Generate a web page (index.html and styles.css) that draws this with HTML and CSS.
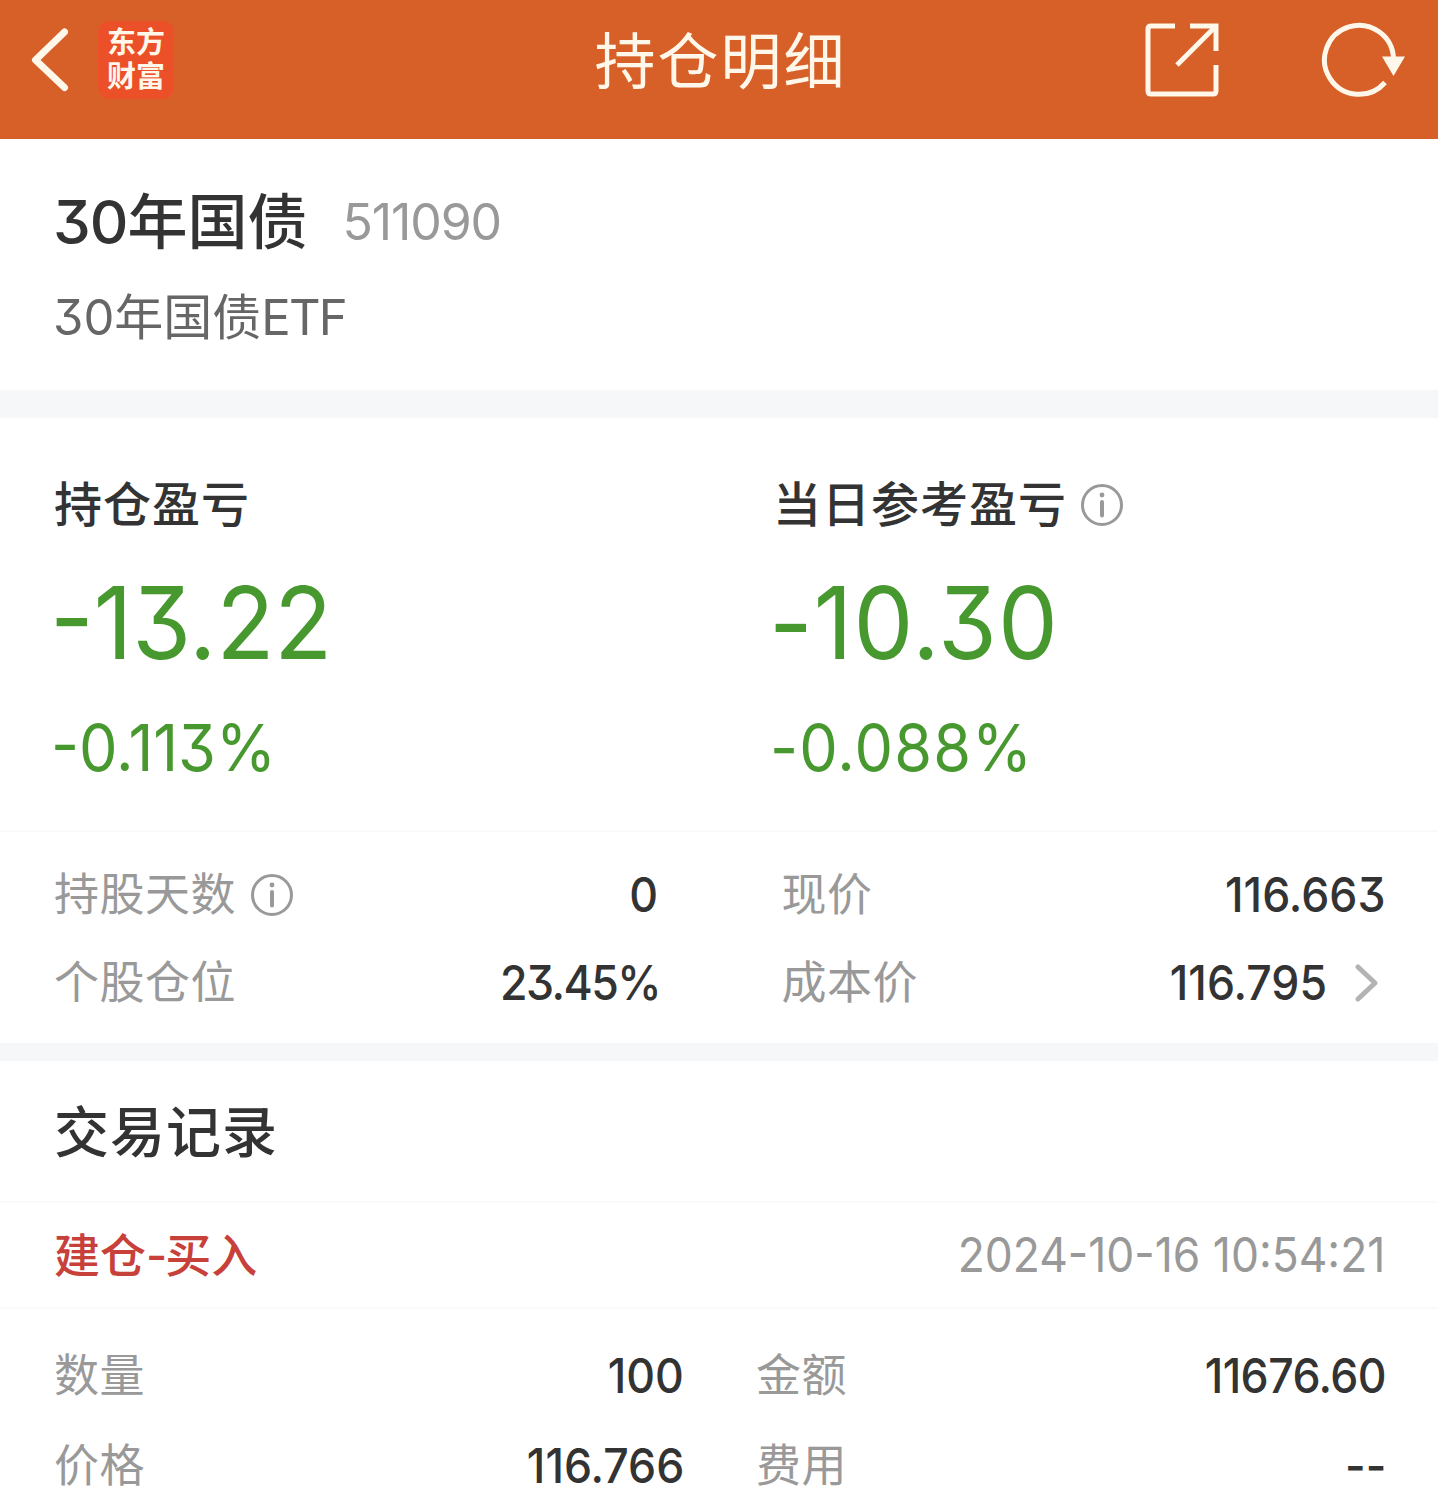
FILE: index.html
```html
<!DOCTYPE html>
<html lang="zh-CN">
<head>
  <meta charset="UTF-8" />
  <meta name="viewport" content="width=device-width, initial-scale=1.0"/>
  <title>持仓明细</title>
  <link rel="stylesheet" href="styles.css">
</head>
<body>
  <header class="header">
    <div class="header-left">
      <svg class="back-icon" viewBox="0 0 40 66" width="40" height="66">
        <path d="M34.500 5 L5.500 33 L34.500 60.500" />
      </svg>
      <div class="logo"><span>东方</span><span>财富</span></div>
    </div>
    <h1 class="header-title">持仓明细</h1>
    <div class="header-right">
      <svg class="share-icon" viewBox="0 0 76 76" width="76" height="76">
        <path d="M31 4 H7 Q4 4 4 7 V69 Q4 72 7 72 H69 Q72 72 72 69 V43" />
        <path d="M46 4 H72 V29" />
        <path d="M71 5 L33 43" />
      </svg>
      <svg class="refresh-icon" viewBox="0 0 86 76" width="86" height="76">
        <path d="M72.500 37 A34.500 34.500 0 1 0 64 60.500" />
        <polygon points="61,34.500 84,34.500 72.500,54" />
      </svg>
    </div>
  </header>

  <section class="stock">
    <div class="stock-name">
      <span class="name"><span class="num">30</span>年国债</span>
      <span class="code">511090</span>
    </div>
    <div class="stock-full">30年国债<span class="etf">ETF</span></div>
  </section>

  <section class="profit">
    <div class="profit-item">
      <div class="profit-label">持仓盈亏</div>
      <div class="profit-value">-13.22</div>
      <div class="profit-rate">-0.113%</div>
    </div>
    <div class="profit-item day">
      <div class="profit-label">当日参考盈亏
        <svg class="info-icon" viewBox="0 0 44 44" width="44" height="44">
          <circle cx="22" cy="22" r="19.500" />
          <path d="M22 19 V32.500" />
          <circle class="dot" cx="22" cy="12" r="2.400" />
        </svg>
      </div>
      <div class="profit-value">-10.30</div>
      <div class="profit-rate">-0.088%</div>
    </div>
  </section>

  <section class="stats">
    <div class="row">
      <span class="label">持股天数
        <svg class="info-icon" viewBox="0 0 44 44" width="44" height="44">
          <circle cx="22" cy="22" r="19.500" />
          <path d="M22 19 V32.500" />
          <circle class="dot" cx="22" cy="12" r="2.400" />
        </svg>
      </span>
      <span class="value">0</span>
    </div>
    <div class="row">
      <span class="label">现价</span>
      <span class="value">116.663</span>
    </div>
    <div class="row">
      <span class="label">个股仓位</span>
      <span class="value percent">23.45%</span>
    </div>
    <div class="row">
      <span class="label">成本价</span>
      <div class="cost">
        <span class="value">116.795</span>
        <svg class="arrow-icon" viewBox="0 0 24 40" width="24" height="40">
          <path d="M3 4 L20 20 L3 36" />
        </svg>
      </div>
    </div>
  </section>

  <section class="records">
    <h2 class="records-title">交易记录</h2>
    <div class="record-head">
      <span class="record-type">建仓<span class="dash">-</span>买入</span>
      <span class="record-time">2024-10-16 10:54:21</span>
    </div>
    <div class="record-body">
      <div class="row">
        <span class="label">数量</span>
        <span class="value">100</span>
      </div>
      <div class="row">
        <span class="label">金额</span>
        <span class="value amount">11676.60</span>
      </div>
      <div class="row">
        <span class="label">价格</span>
        <span class="value">116.766</span>
      </div>
      <div class="row">
        <span class="label">费用</span>
        <span class="value">--</span>
      </div>
    </div>
  </section>
</body>
</html>
```

FILE: styles.css
```css
* {
  box-sizing: border-box;
}

body {
  margin: 0;
  height: 1500px;
  overflow: hidden;
  background: #fff;
  color: #333;
  font-family: Inter, "Noto Sans CJK SC", sans-serif;
  font-feature-settings: "cv09" 1;
}

h1,
h2 {
  margin: 0;
  font-weight: 400;
}

svg {
  display: block;
  flex: none;
  fill: none;
}

/* header */
.header {
  display: grid;
  grid-template-columns: 1fr auto 1fr;
  align-items: center;
  height: 139px;
  padding: 0 31px 19px 30px;
  background: #d75f28;
  color: #fff8ea;
}

.header-left {
  display: flex;
  align-items: center;
  gap: 28px;
}

.back-icon {
  stroke: #fff8ea;
  stroke-width: 7;
  stroke-linecap: round;
  stroke-linejoin: round;
}

.logo {
  display: flex;
  flex-direction: column;
  align-items: center;
  justify-content: center;
  width: 76px;
  height: 78px;
  border-radius: 12px;
  background: #ec5029;
  font-size: 29px;
  font-weight: 700;
  line-height: 34px;
}

.header-title {
  padding: 3px 0 0 4px;
  font-size: 61px;
  letter-spacing: 2px;
  line-height: 80px;
}

.header-right {
  display: flex;
  align-items: center;
  justify-content: flex-end;
  gap: 101px;
}

.share-icon,
.refresh-icon {
  stroke: #fff8ea;
  stroke-width: 5;
}

.refresh-icon polygon {
  fill: #fff8ea;
  stroke: none;
}

/* stock name */
.stock {
  height: 279px;
  padding: 41px 53px 0;
  border-bottom: 28px solid #f6f7f9;
}

.stock-name {
  display: flex;
  align-items: center;
  gap: 35px;
  line-height: 84px;
}

.name {
  font-size: 60px;
  font-weight: 500;
}

.num {
  letter-spacing: -1px;
}

.code {
  color: #999;
  font-size: 50px;
  letter-spacing: -1.100px;
}

.stock-full {
  margin-top: 19px;
  color: #666;
  font-size: 49px;
  line-height: 69px;
}

.etf {
  letter-spacing: -1.800px;
}

/* profit */
.profit {
  display: grid;
  grid-template-columns: 1fr 1fr;
  height: 414px;
  padding-top: 57px;
  border-bottom: 2px solid #fafafa;
}

.profit-item {
  padding-left: 54px;
}

.profit-label {
  display: flex;
  align-items: center;
  gap: 13px;
  font-size: 48px;
  font-weight: 500;
  letter-spacing: 1px;
  line-height: 60px;
}

/* slightly condensed digits */
.profit-value,
.profit-rate {
  color: #47992f;
  transform: scaleX(0.940);
  transform-origin: left;
}

.profit-value {
  margin: 37px 0 0 -4px;
  font-size: 101px;
  line-height: 101px;
}

.profit-rate {
  margin: 40px 0 0 -3px;
  font-size: 65px;
  line-height: 70px;
}

.day .profit-value,
.day .profit-rate {
  letter-spacing: 1.200px;
}

.info-icon {
  stroke: #999;
  stroke-width: 3;
  stroke-linecap: round;
}

.info-icon path {
  stroke-width: 4;
}

.info-icon .dot {
  fill: #999;
  stroke: none;
}

/* stats */
.stats {
  display: grid;
  grid-template-columns: 1fr 1fr;
  align-content: start;
  column-gap: 124px;
  height: 229px;
  padding: 19px 53px 0 54px;
  border-bottom: 18px solid #f6f7f9;
}

.row {
  display: flex;
  align-items: center;
  justify-content: space-between;
  height: 88px;
}

.label {
  display: flex;
  align-items: center;
  gap: 14px;
  color: #999;
  font-size: 45px;
  letter-spacing: 0.500px;
  line-height: 60px;
}

.value {
  font-size: 48px;
  font-weight: 450;
  line-height: 60px;
  transform: scaleX(0.930);
  transform-origin: right;
}

.percent {
  margin-right: -2px;
  letter-spacing: -1.700px;
}

.amount {
  letter-spacing: -0.600px;
}

.cost {
  display: flex;
  align-items: center;
  gap: 28px;
}

.arrow-icon {
  margin-right: 6px;
  stroke: #b3b3b3;
  stroke-width: 5;
  stroke-linecap: round;
  stroke-linejoin: round;
}

/* records */
.records-title {
  height: 140px;
  padding-left: 54px;
  font-size: 55px;
  font-weight: 500;
  letter-spacing: 1px;
  line-height: 142px;
}

.record-head {
  display: flex;
  align-items: center;
  justify-content: space-between;
  height: 108px;
  padding: 0 53px 0 54px;
  border-top: 2px solid #fafafa;
  border-bottom: 2px solid #fafafa;
}

.record-type {
  color: #c8403a;
  font-size: 46px;
  font-weight: 500;
  line-height: 60px;
}

.dash {
  letter-spacing: -2px;
}

.record-time {
  color: #999;
  font-size: 48px;
  line-height: 60px;
  transform: scaleX(0.925);
  transform-origin: right;
}

.record-body {
  display: grid;
  grid-template-columns: 1fr 1fr;
  column-gap: 72px;
  padding: 22px 52px 0 54px;
}

.record-body .row {
  height: 90px;
}
```
